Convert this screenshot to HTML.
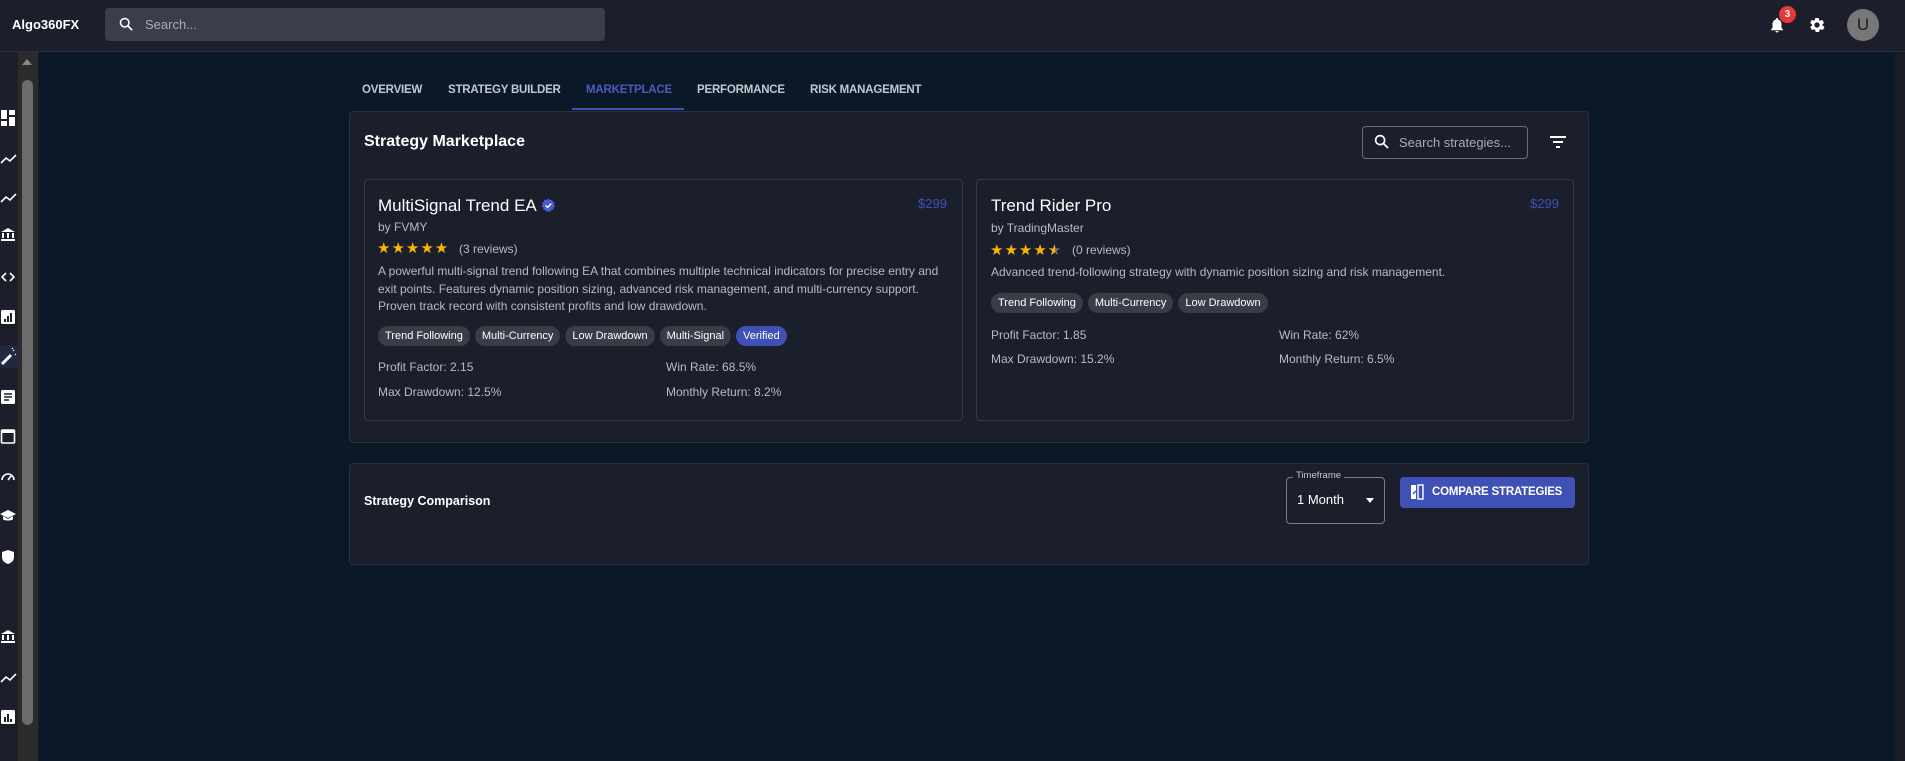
<!DOCTYPE html>
<html><head><meta charset="utf-8"><style>
*{box-sizing:border-box;margin:0;padding:0}
body{width:1905px;height:761px;overflow:hidden;background:#0b1828;font-family:"Liberation Sans",sans-serif;color:#fff;position:relative}
.a{position:absolute}
.top{left:0;top:0;width:1905px;height:52px;background:#1c1f2b;border-bottom:1px solid #2c303a}
.side{left:0;top:52px;width:39px;height:709px;background:#1c1f2b}
.tab{top:84px;font-size:11.5px;font-weight:bold;color:#c4c7ce;letter-spacing:-0.2px}
.panel{background:#1b1f2b;border:1px solid #2d313c;border-radius:4px}
.card{border:1px solid #33374a;border-radius:4px;background:#1b1f2b}
.t1{font-size:17px}
.g{color:#b8bbc2;font-size:12px}
.chip{display:inline-block;height:20px;line-height:20px;padding:0 7px;border-radius:10px;background:#3a3d48;font-size:11px;color:#fff;margin-right:5px}
.st{color:#ffb400;font-size:15px;letter-spacing:1px}
</style></head><body>
<div class="a top"></div>
<div class="a" style="left:12px;top:17px;font-size:13px;font-weight:bold">Algo360FX</div>
<div class="a" style="left:105px;top:8px;width:500px;height:33px;background:#3a3e4a;border-radius:4px"></div>
<svg class="a" style="left:118px;top:16px" width="17" height="17" viewBox="0 0 24 24"><circle cx="9.5" cy="9.5" r="6" stroke="#fff" stroke-width="2.2" fill="none"/><path d="M14 14l6 6" stroke="#fff" stroke-width="2.4"/></svg>
<div class="a" style="left:145px;top:17px;font-size:13px;color:#a9acb4">Search...</div>
<svg class="a" style="left:1768px;top:16px" width="18" height="18" viewBox="0 0 24 24"><path fill="#fff" d="M12 22c1.1 0 2-.9 2-2h-4c0 1.1.9 2 2 2zm6-6v-5c0-3.1-1.6-5.6-4.5-6.3V4c0-.8-.7-1.5-1.5-1.5s-1.5.7-1.5 1.5v.7C7.6 5.4 6 7.9 6 11v5l-2 2v1h16v-1l-2-2z"/></svg>
<div class="a" style="left:1779px;top:6px;width:17px;height:17px;border-radius:50%;background:#e53935;font-size:10px;font-weight:bold;text-align:center;line-height:17px">3</div>
<svg class="a" style="left:1808px;top:16px" width="18" height="18" viewBox="0 0 24 24"><path fill="#fff" d="M19.1 12.9c0-.3.1-.6.1-.9s0-.6-.1-.9l2-1.6c.2-.1.2-.4.1-.6l-1.9-3.3c-.1-.2-.4-.3-.6-.2l-2.4 1c-.5-.4-1-.7-1.600-.9L14.4 3c0-.2-.2-.4-.5-.4h-3.8c-.2 0-.4.2-.5.4l-.4 2.5c-.6.2-1.100.6-1.600.9l-2.400-1c-.2-.1-.5 0-.6.2L3.2 8.9c-.1.2-.1.5.1.6l2 1.6c0 .3-.1.6-.1.9s0 .6.1.9l-2 1.6c-.2.1-.2.4-.1.6l1.9 3.3c.1.2.4.3.6.2l2.4-1c.5.4 1 .7 1.6.9l.4 2.5c0 .2.2.4.5.4h3.8c.2 0 .4-.2.5-.4l.4-2.5c.6-.2 1.1-.6 1.6-.9l2.4 1c.2.1.5 0 .6-.2l1.9-3.3c.1-.2.1-.5-.1-.6l-2-1.6zM12 15.5c-1.9 0-3.5-1.6-3.5-3.5s1.6-3.5 3.5-3.5 3.5 1.6 3.5 3.5-1.6 3.5-3.5 3.5z"/></svg>
<div class="a" style="left:1847px;top:9px;width:32px;height:32px;border-radius:50%;background:#777;color:#1c1f2b;font-size:17px;text-align:center;line-height:32px">U</div>

<div class="a side"></div>
<div class="a" style="left:18px;top:52px;width:20px;height:709px;background:#2b2b2b"></div>
<div class="a" style="left:22px;top:59px;width:0;height:0;border-left:5px solid transparent;border-right:5px solid transparent;border-bottom:6px solid #888"></div>
<div class="a" style="left:22px;top:80px;width:11px;height:645px;border-radius:6px;background:#6b6b6b"></div>
<div class="a" style="left:0;top:346px;width:18px;height:22px;background:#202843"></div>
<svg class="a" style="left:0;top:110px" width="18" height="620" viewBox="0 0 18 620" fill="#fff" stroke="#fff">
<g stroke="none"><rect x="1" y="0" width="6" height="9"/><rect x="9" y="0" width="6" height="5"/><rect x="1" y="11" width="6" height="5"/><rect x="9" y="7" width="6" height="9"/></g>
<path d="M1 53l5-5 4 3 6-6" fill="none" stroke-width="1.6"/>
<path d="M1 92l5-5 4 3 6-6" fill="none" stroke-width="1.6"/>
<g stroke="none"><path d="M1 122l7-4 7 4z"/><rect x="2" y="123" width="2" height="5"/><rect x="7" y="123" width="2" height="5"/><rect x="12" y="123" width="2" height="5"/><rect x="1" y="129" width="14" height="2"/></g>
<path d="M6 163l-4 4 4 4M10 163l4 4-4 4" fill="none" stroke-width="1.6"/>
<g stroke="none"><rect x="1" y="200" width="14" height="14" rx="1.5"/></g><g fill="#1c1f2b" stroke="none"><rect x="4" y="209" width="2" height="3"/><rect x="7" y="206" width="2" height="6"/><rect x="10" y="203" width="2" height="9"/></g>
<path d="M2 254l9-9" stroke-width="3"/><path d="M13 240l1 1M15 244l1 1M12 238l1 1" stroke-width="1.2"/>
<g stroke="none"><rect x="1" y="280" width="14" height="14" rx="1.5"/></g><g stroke="#1c1f2b" stroke-width="1.4"><path d="M4 284h8M4 287h8M4 290h5"/></g>
<rect x="1.5" y="320" width="13" height="13" rx="1" fill="none" stroke-width="1.6"/><rect x="1" y="320" width="14" height="3" stroke="none"/>
<path d="M2 370a6 6 0 1 1 12 0" fill="none" stroke-width="1.6"/><path d="M8 370l3-4" stroke-width="1.6"/>
<g stroke="none"><path d="M0 404l8-4 8 4-8 4z"/><path d="M3 406v3c0 2 10 2 10 0v-3l-5 3z"/></g>
<path stroke="none" d="M8 440l6 2v5c0 4-3 6-6 7-3-1-6-3-6-7v-5z"/>
<g stroke="none"><path d="M1 524l7-4 7 4z"/><rect x="2" y="525" width="2" height="5"/><rect x="7" y="525" width="2" height="5"/><rect x="12" y="525" width="2" height="5"/><rect x="1" y="531" width="14" height="2"/></g>
<path d="M1 572l5-5 4 3 6-6" fill="none" stroke-width="1.6"/>
<g stroke="none"><rect x="1" y="600" width="14" height="14" rx="1.5"/></g><g fill="#1c1f2b" stroke="none"><rect x="4" y="607" width="2" height="5"/><rect x="7" y="604" width="2" height="8"/><rect x="10" y="609" width="2" height="3"/></g>
</svg>
<div class="a" style="left:1895px;top:52px;width:10px;height:709px;background:#1a1d27"></div>

<div class="a tab" style="left:362px">OVERVIEW</div>
<div class="a tab" style="left:448px">STRATEGY BUILDER</div>
<div class="a tab" style="left:586px;color:#4a5bbd">MARKETPLACE</div>
<div class="a tab" style="left:697px">PERFORMANCE</div>
<div class="a tab" style="left:810px">RISK MANAGEMENT</div>
<div class="a" style="left:572px;top:108px;width:112px;height:2px;background:#3f51b5"></div>

<div class="a panel" style="left:349px;top:111px;width:1240px;height:332px"></div>
<div class="a" style="left:364px;top:133px;font-size:16px;font-weight:bold">Strategy Marketplace</div>
<div class="a" style="left:1362px;top:126px;width:166px;height:33px;border:1px solid #6a6e78;border-radius:4px"></div>
<svg class="a" style="left:1373px;top:133px" width="18" height="18" viewBox="0 0 24 24"><circle cx="9.5" cy="9.5" r="6" stroke="#fff" stroke-width="2.2" fill="none"/><path d="M14 14l6 6" stroke="#fff" stroke-width="2.4"/></svg>
<div class="a" style="left:1399px;top:135px;font-size:13px;color:#a9acb4">Search strategies...</div>
<svg class="a" style="left:1549px;top:134px" width="18" height="16" viewBox="0 0 18 16" fill="#fff"><rect x="1" y="2" width="16" height="2"/><rect x="4" y="7" width="10" height="2"/><rect x="7" y="12" width="4" height="2"/></svg>

<div class="a card" style="left:364px;top:179px;width:599px;height:242px"></div>
<div class="a t1" style="left:378px;top:196px">MultiSignal Trend EA</div>
<svg class="a" style="left:541px;top:198px" width="15" height="15" viewBox="0 0 24 24"><path fill="#4a5bd0" d="M12 1l2.6 2.1 3.3-.4 1 3.2 3 1.5-.9 3.2 1.6 2.9-2.6 2.1-.2 3.3-3.3.5-1.8 2.8L12 20.9l-3.1 1.3-1.8-2.8-3.3-.5-.2-3.3L1 13.5l1.6-2.9-.9-3.2 3-1.5 1-3.2 3.3.4z"/><path d="M7.5 12l3 3 6-6" stroke="#fff" stroke-width="2.2" fill="none"/></svg>
<div class="a" style="left:918px;top:196px;font-size:13px;color:#3f51b5">$299</div>
<div class="a g" style="left:378px;top:220px">by FVMY</div>
<div class="a st" style="left:377px;top:239px">★★★★★</div>
<div class="a g" style="left:459px;top:242px">(3 reviews)</div>
<div class="a g" style="left:378px;top:263px;width:580px;line-height:17.5px">A powerful multi-signal trend following EA that combines multiple technical indicators for precise entry and exit points. Features dynamic position sizing, advanced risk management, and multi-currency support. Proven track record with consistent profits and low drawdown.</div>
<div class="a" style="left:378px;top:326px;white-space:nowrap"><span class="chip">Trend Following</span><span class="chip">Multi-Currency</span><span class="chip">Low Drawdown</span><span class="chip">Multi-Signal</span><span class="chip" style="background:#3f51b5">Verified</span></div>
<div class="a g" style="left:378px;top:360px">Profit Factor: 2.15</div>
<div class="a g" style="left:666px;top:360px">Win Rate: 68.5%</div>
<div class="a g" style="left:378px;top:385px">Max Drawdown: 12.5%</div>
<div class="a g" style="left:666px;top:385px">Monthly Return: 8.2%</div>

<div class="a card" style="left:976px;top:179px;width:598px;height:242px"></div>
<div class="a t1" style="left:991px;top:196px">Trend Rider Pro</div>
<div class="a" style="left:1530px;top:196px;font-size:13px;color:#3f51b5">$299</div>
<div class="a g" style="left:991px;top:221px">by TradingMaster</div>
<div class="a st" style="left:990px;top:241px">★★★★<span style="background:linear-gradient(90deg,#ffb400 50%,#777 50%);-webkit-background-clip:text;color:transparent">★</span></div>
<div class="a g" style="left:1072px;top:243px">(0 reviews)</div>
<div class="a g" style="left:991px;top:265px">Advanced trend-following strategy with dynamic position sizing and risk management.</div>
<div class="a" style="left:991px;top:293px;white-space:nowrap"><span class="chip">Trend Following</span><span class="chip">Multi-Currency</span><span class="chip">Low Drawdown</span></div>
<div class="a g" style="left:991px;top:328px">Profit Factor: 1.85</div>
<div class="a g" style="left:1279px;top:328px">Win Rate: 62%</div>
<div class="a g" style="left:991px;top:352px">Max Drawdown: 15.2%</div>
<div class="a g" style="left:1279px;top:352px">Monthly Return: 6.5%</div>

<div class="a panel" style="left:349px;top:463px;width:1240px;height:102px"></div>
<div class="a" style="left:364px;top:494px;font-size:12.5px;font-weight:bold">Strategy Comparison</div>
<div class="a" style="left:1286px;top:477px;width:99px;height:47px;border:1px solid #7a7e88;border-radius:4px"></div>
<div class="a" style="left:1293px;top:470px;padding:0 3px;background:#1b1f2b;font-size:9.5px;color:#c4c7ce">Timeframe</div>
<div class="a" style="left:1297px;top:492px;font-size:13px">1 Month</div>
<div class="a" style="left:1366px;top:498px;width:0;height:0;border-left:4.5px solid transparent;border-right:4.5px solid transparent;border-top:5px solid #fff"></div>
<div class="a" style="left:1400px;top:477px;width:175px;height:31px;background:#3f51b5;border-radius:4px"></div>
<svg class="a" style="left:1410px;top:484px" width="14" height="16" viewBox="0 0 14 16"><rect x="1" y="1" width="5" height="14" fill="#fff"/><rect x="8" y="1" width="5" height="14" fill="none" stroke="#fff" stroke-width="1.4"/><path d="M3 10l3-3" stroke="#3f51b5" stroke-width="1.4"/></svg>
<div class="a" style="left:1432px;top:486px;font-size:11.5px;font-weight:bold;letter-spacing:-0.2px">COMPARE STRATEGIES</div>
</body></html>
